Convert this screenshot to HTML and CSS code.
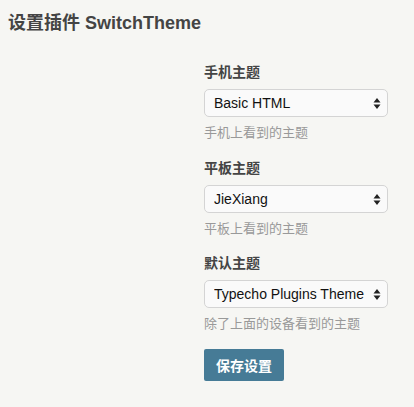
FILE: index.html
```html
<!DOCTYPE html>
<html lang="zh-CN">
<head>
<meta charset="utf-8">
<title>设置插件 SwitchTheme</title>
<link rel="stylesheet" href="styles.css">
</head>
<body>
<div class="page">
  <h2 class="title">设置插件 SwitchTheme</h2>
  <form class="form">
    <div class="group">
      <label class="label">手机主题</label>
      <div class="select-wrap">
        <select class="select"><option>Basic HTML</option></select>
        <svg class="arrows" width="8" height="11" viewBox="0 0 8 11"><path d="M4 0 L7.5 4.5 L0.5 4.5 Z M4 11 L7.5 6.5 L0.5 6.5 Z" fill="#222"/></svg>
      </div>
      <p class="desc">手机上看到的主题</p>
    </div>
    <div class="group">
      <label class="label">平板主题</label>
      <div class="select-wrap">
        <select class="select"><option>JieXiang</option></select>
        <svg class="arrows" width="8" height="11" viewBox="0 0 8 11"><path d="M4 0 L7.5 4.5 L0.5 4.5 Z M4 11 L7.5 6.5 L0.5 6.5 Z" fill="#222"/></svg>
      </div>
      <p class="desc">平板上看到的主题</p>
    </div>
    <div class="group">
      <label class="label">默认主题</label>
      <div class="select-wrap">
        <select class="select"><option>Typecho Plugins Theme</option></select>
        <svg class="arrows" width="8" height="11" viewBox="0 0 8 11"><path d="M4 0 L7.5 4.5 L0.5 4.5 Z M4 11 L7.5 6.5 L0.5 6.5 Z" fill="#222"/></svg>
      </div>
      <p class="desc">除了上面的设备看到的主题</p>
    </div>
    <button type="button" class="btn">保存设置</button>
  </form>
</div>
</body>
</html>
```

FILE: styles.css
```css
html, body {
  margin: 0;
  padding: 0;
  background: #f6f6f3;
}
body {
  font-family: "Liberation Sans", "Noto Sans CJK SC", sans-serif;
  color: #444;
}
.page {
  padding: 11px 0 0 8px;
}
.title {
  margin: 0;
  font-size: 18px;
  line-height: 24px;
  font-weight: bold;
  color: #444;
}
.form {
  margin: 29px 0 0 196px;
  width: 184px;
}
.group {
  margin-bottom: 18.5px;
}
.label {
  display: block;
  font-size: 14px;
  line-height: 16px;
  font-weight: bold;
  color: #444;
  margin-bottom: 9px;
}
.select-wrap {
  position: relative;
  width: 184px;
  height: 28px;
}
.select {
  -webkit-appearance: none;
  appearance: none;
  box-sizing: border-box;
  width: 184px;
  height: 28px;
  margin: 0;
  padding: 0 20px 0 9px;
  border: 1px solid #d4d4d4;
  border-radius: 5px;
  background: #fafafa;
  font-family: "Liberation Sans", "Noto Sans CJK SC", sans-serif;
  font-size: 14px;
  color: #111;
}
.arrows {
  position: absolute;
  right: 7px;
  top: 9px;
}
.desc {
  margin: 8px 0 0;
  font-size: 13px;
  line-height: 16px;
  color: #999;
}
.btn {
  display: block;
  margin-top: -2px;
  width: 80px;
  height: 32px;
  border: 0;
  border-radius: 2px;
  background: #467b96;
  color: #fff;
  font-family: "Liberation Sans", "Noto Sans CJK SC", sans-serif;
  font-size: 14px;
  font-weight: bold;
  padding: 0;
}
```
